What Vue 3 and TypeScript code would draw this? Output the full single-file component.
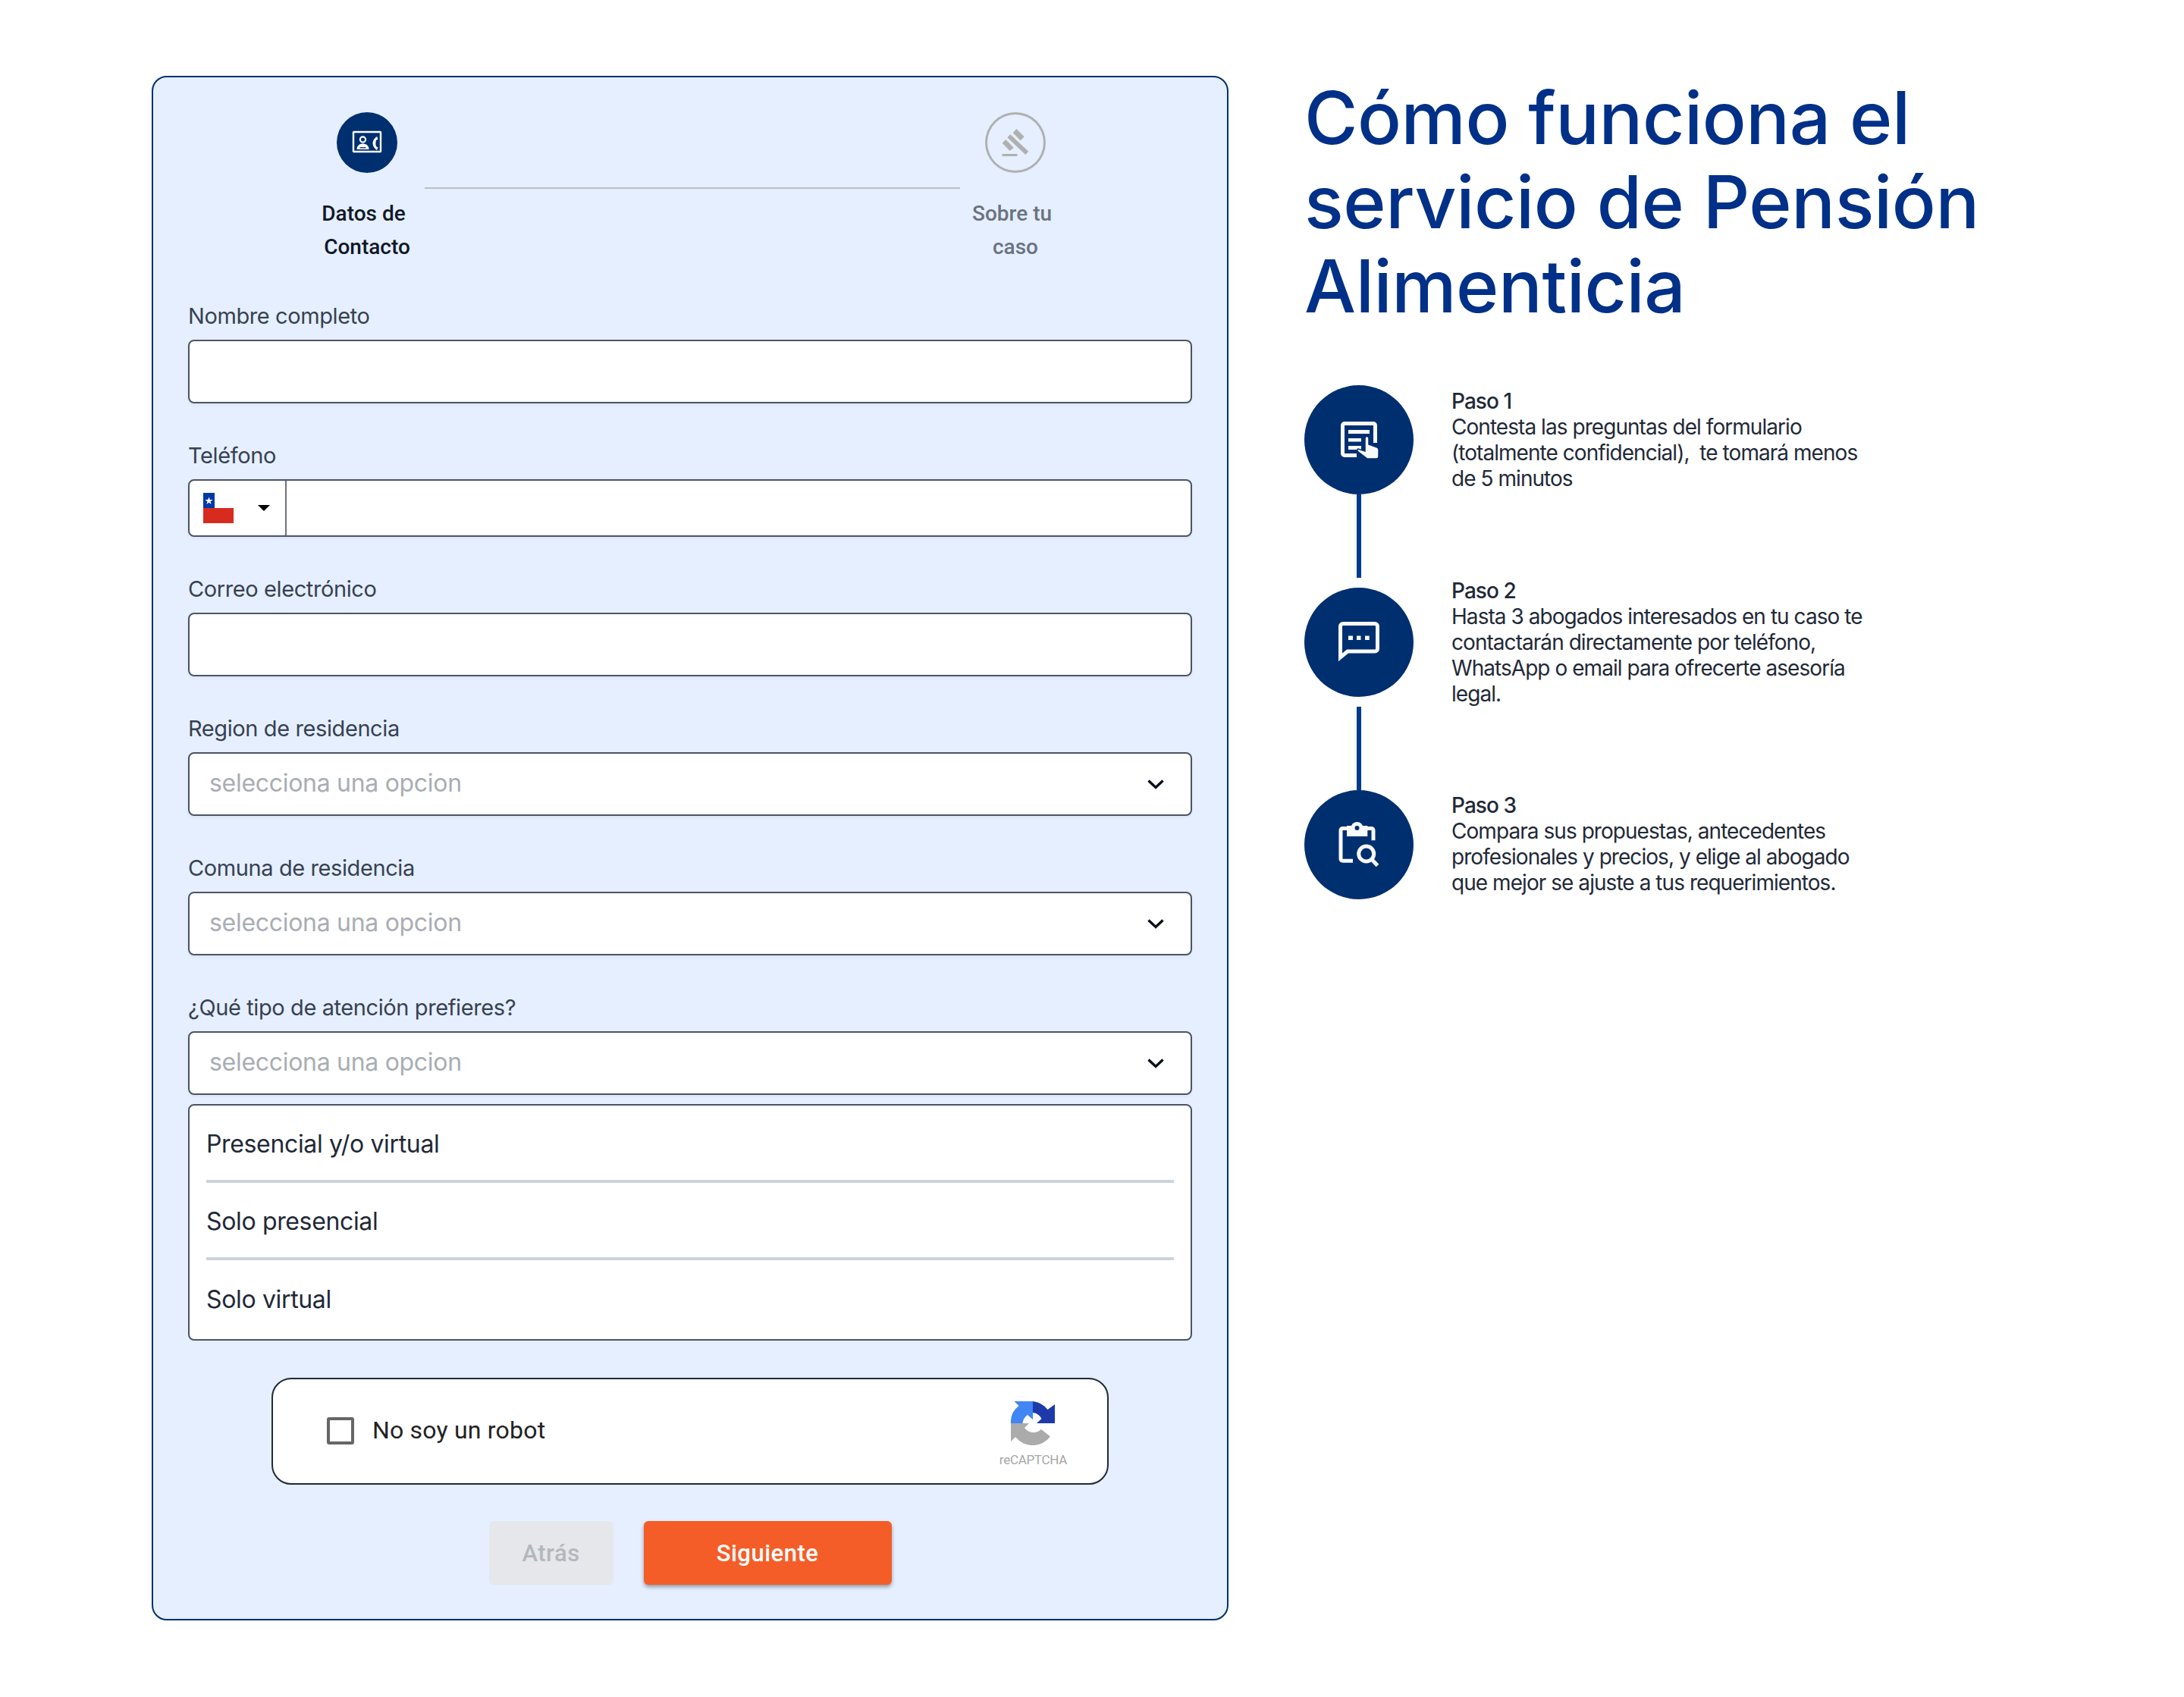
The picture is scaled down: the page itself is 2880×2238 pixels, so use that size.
<script setup lang="ts">
const selects = [
  { label: 'Region de residencia' },
  { label: 'Comuna de residencia' },
  { label: '¿Qué tipo de atención prefieres?' },
];
const options = ['Presencial y/o virtual', 'Solo presencial', 'Solo virtual'];
const steps = [
  {
    title: 'Paso 1',
    lines: ['Contesta las preguntas del formulario', '(totalmente confidencial),  te tomará menos', 'de 5 minutos'],
  },
  {
    title: 'Paso 2',
    lines: [
      'Hasta 3 abogados interesados en tu caso te',
      'contactarán directamente por teléfono,',
      'WhatsApp o email para ofrecerte asesoría',
      'legal.',
    ],
  },
  {
    title: 'Paso 3',
    lines: [
      'Compara sus propuestas, antecedentes',
      'profesionales y precios, y elige al abogado',
      'que mejor se ajuste a tus requerimientos.',
    ],
  },
];
</script>

<template>
  <div class="page">
    <form class="card" @submit.prevent>
      <div class="stepper">
        <div class="step active">
          <span class="step-circle">
            <svg width="80" height="80" viewBox="0 0 80 80">
              <rect x="22" y="26" width="36" height="26" rx="0.5" fill="none" stroke="#fff" stroke-width="2.4" />
              <circle cx="34.5" cy="36" r="3.6" fill="none" stroke="#fff" stroke-width="2.2" />
              <path d="M26.5 49c0-5 3.5-7.5 8-7.5s8 2.5 8 7.5z" fill="#fff" />
              <path d="M30.5 46.8h8" stroke="#002f6f" stroke-width="1.4" />
              <path d="M53 32c-3 2-5.5 5-5.5 9s2.5 7 5.5 9l1.5-3.5-2.5-1.5c-.8-2.5-.8-5.5 0-8l2.5-1.5z" fill="#fff" />
            </svg>
          </span>
          <span class="step-text"><span class="first-line">Datos de</span><br />Contacto</span>
        </div>
        <div class="step-line"></div>
        <div class="step">
          <span class="step-circle idle">
            <svg width="80" height="80" viewBox="0 0 80 80">
              <path d="M36.7 27.3L41.3 22l10.4 10.3-5 5z" fill="#b0b0ae" />
              <path d="M22.7 40.7l4.6-4.7 10.4 10.7-5 4.3z" fill="#b0b0ae" />
              <path d="M29.3 33.3l4-4 24 22.4-4 4.3z" fill="#b0b0ae" />
              <rect x="22.5" y="55" width="20" height="3" fill="#b0b0ae" />
            </svg>
          </span>
          <span class="step-text"><span class="first-line">Sobre tu</span><br />caso</span>
        </div>
      </div>

      <label class="field-label first">Nombre completo</label>
      <div class="input"></div>

      <label class="field-label">Teléfono</label>
      <div class="input phone">
        <div class="country">
          <svg class="flag" width="40" height="40" viewBox="0 0 40 40">
            <rect width="15" height="20" fill="#0039a6" />
            <rect x="15" width="25" height="20" fill="#fff" />
            <rect y="20" width="40" height="20" fill="#d72b1f" />
            <path d="M7.5 5.5l1.3 3.6h3.7l-3 2.3 1.1 3.6-3.1-2.2-3.1 2.2 1.1-3.6-3-2.3h3.7z" fill="#fff" />
          </svg>
          <span class="caret"></span>
        </div>
      </div>

      <label class="field-label">Correo electrónico</label>
      <div class="input"></div>

      <template v-for="item in selects" :key="item.label">
        <label class="field-label">{{ item.label }}</label>
        <div class="input select">
          <span class="placeholder">selecciona una opcion</span>
          <svg width="24" height="24" viewBox="0 0 24 24">
            <path d="M2.5 7.5L12 16.5l9.5-9" fill="none" stroke="#0b0f19" stroke-width="3.4" />
          </svg>
        </div>
      </template>

      <ul class="option-list">
        <li v-for="opt in options" :key="opt" class="option">{{ opt }}</li>
      </ul>

      <div class="captcha">
        <span class="check"></span>
        <span class="captcha-text">No soy un robot</span>
        <div class="captcha-brand">
          <svg width="58" height="58" viewBox="0 0 58 58">
            <path d="M29 0H4.5L10.5 6A27 27 0 0 0 0 29H15.5A15 15 0 0 1 22 18L29 24Z" fill="#4285f4" />
            <path d="M29 0A29 29 0 0 1 48.5 11L58 4V29H34L40.5 23A15 15 0 0 0 29 15Z" fill="#1c3aa9" />
            <path d="M0 29H24L18 35A14.5 14.5 0 0 0 40 37L52 46.5A29 29 0 0 1 6 47L0 53Z" fill="#ababab" />
          </svg>
          <span class="brand-name">reCAPTCHA</span>
        </div>
      </div>

      <div class="actions">
        <button type="button" class="btn back" disabled>Atrás</button>
        <button type="submit" class="btn next">Siguiente</button>
      </div>
    </form>

    <aside class="how">
      <h1 class="how-title">Cómo funciona el<br />servicio de Pensión<br />Alimenticia</h1>
      <div class="timeline">
        <div v-for="(step, i) in steps" :key="step.title" class="tl-row" :class="'row-' + (i + 1)">
          <div class="tl-marker">
            <span class="tl-circle">
              <svg v-if="i === 0" width="144" height="144" viewBox="0 0 144 144">
                <path d="M69 92.5H53a2.5 2.5 0 0 1-2.5-2.5V53a2.5 2.5 0 0 1 2.5-2.5h38a2.5 2.5 0 0 1 2.5 2.5v23" fill="none" stroke="#f8fafc" stroke-width="5" />
                <path d="M58 59h28v5H58zM58 70h17v4.5H58zM58 80h17v5H58z" fill="#f8fafc" />
                <path d="M80 70a2.5 2.5 0 0 1 5 0v8l11 4q2 1 2 3v9q0 3-3 3H83L70 87q-1-2 1-3l9 3z" fill="#f8fafc" stroke="#002f6f" stroke-width="1.5" />
              </svg>
              <svg v-else-if="i === 1" width="144" height="144" viewBox="0 0 144 144">
                <path d="M47.5 92V51a3.5 3.5 0 0 1 3.5-3.5h42a3.5 3.5 0 0 1 3.5 3.5v29.5a3.5 3.5 0 0 1-3.5 3.5H57z" fill="none" stroke="#f8fafc" stroke-width="5" />
                <path d="M58 63.5h6V69h-6zM69 63.5h5.5V69H69zM80 63.5h5.7V69H80z" fill="#f8fafc" />
              </svg>
              <svg v-else width="144" height="144" viewBox="0 0 144 144">
                <path d="M64 93.2H50.5a2.5 2.5 0 0 1-2.5-2.5V53a2.5 2.5 0 0 1 2.5-2.5H56M83 50.5h5.5A2.5 2.5 0 0 1 91 53v13.3" fill="none" stroke="#f8fafc" stroke-width="5" />
                <rect x="56" y="47" width="27.3" height="14" fill="#f8fafc" />
                <circle cx="69.5" cy="50" r="8" fill="#f8fafc" />
                <circle cx="69.5" cy="50" r="3" fill="#002f6f" />
                <circle cx="81.7" cy="84" r="10" fill="none" stroke="#f8fafc" stroke-width="5" />
                <path d="M89 91.5l7.5 8" stroke="#f8fafc" stroke-width="5" />
              </svg>
            </span>
            <span v-if="i < 2" class="tl-line"></span>
          </div>
          <div class="tl-text">
            <p class="tl-title">{{ step.title }}</p>
            <p v-for="line in step.lines" :key="line">{{ line }}</p>
          </div>
        </div>
      </div>
    </aside>
  </div>
</template>

<style scoped>
.page {
  display: flex;
  align-items: flex-start;
  gap: 100px;
  width: 2880px;
  height: 2238px;
  box-sizing: border-box;
  padding: 100px 0 0 200px;
  background: #fff;
  font-family: Inter, "Noto Sans", sans-serif;
}

.card {
  box-sizing: border-box;
  width: 1420px;
  height: 2037px;
  padding: 46px 46px 0;
  background: #e5efff;
  border: 2px solid #002f6f;
  border-radius: 20px;
  display: flex;
  flex-direction: column;
}

.stepper {
  display: flex;
  align-items: flex-start;
  height: 250px;
}

.step {
  width: 146px;
  flex: none;
  display: flex;
  flex-direction: column;
  align-items: center;
  color: #6b7280;
}

.step.active {
  margin-left: 163px;
  color: #111827;
}

.step-circle {
  width: 80px;
  height: 80px;
  border-radius: 50%;
  background: #002f6f;
  display: flex;
  align-items: center;
  justify-content: center;
}

.step-circle.idle {
  background: transparent;
  box-shadow: inset 0 0 0 3px #b0b0ae;
}

.step-text {
  margin-top: 32px;
  font-family: Roboto, sans-serif;
  font-size: 28px;
  font-weight: 500;
  line-height: 44px;
  text-align: center;
}

.first-line {
  padding-right: 9px;
}

.step-line {
  width: 706px;
  height: 2px;
  flex: none;
  margin-top: 99px;
  margin-left: 3px;
  background: #bdbdbd;
}

.field-label {
  display: block;
  height: 32px;
  margin: 53px 0 15px;
  font-size: 29px;
  line-height: 32px;
  color: #374151;
  letter-spacing: -0.4px;
}

.field-label.first {
  margin-top: 3px;
}

.input {
  box-sizing: border-box;
  height: 84px;
  flex: none;
  background: #fff;
  border: 2px solid #4b5563;
  border-radius: 8px;
  box-shadow: 0 2px 4px rgba(0, 0, 0, 0.05);
}

.input.phone {
  height: 76px;
  display: flex;
}

.input.select {
  display: flex;
  align-items: center;
  justify-content: space-between;
  padding: 0 34px 0 26px;
}

.country {
  box-sizing: border-box;
  width: 128px;
  height: 100%;
  display: flex;
  align-items: center;
  padding-left: 18px;
  border-right: 2px solid #6b7280;
}

.caret {
  margin-left: 32px;
  border-left: 8px solid transparent;
  border-right: 8px solid transparent;
  border-top: 8px solid #000;
}

.placeholder {
  font-size: 32px;
  line-height: 40px;
  margin-top: -2px;
  color: #a9adb4;
  letter-spacing: -0.3px;
}

.option-list {
  box-sizing: border-box;
  height: 312px;
  flex: none;
  margin: 12px 0 0;
  padding: 0 22px;
  list-style: none;
  background: #fff;
  border: 2px solid #4b5563;
  border-radius: 8px;
}

.option {
  height: 102px;
  padding-top: 2px;
  display: flex;
  align-items: center;
  font-size: 32px;
  color: #1f2937;
  letter-spacing: -0.35px;
  border-bottom: 4px solid #cdd3dc;
  box-sizing: border-box;
}

.option:last-child {
  padding-top: 0;
  border-bottom: none;
}

.captcha {
  box-sizing: border-box;
  flex: none;
  align-self: center;
  width: 1104px;
  height: 141px;
  margin-top: 49px;
  padding: 0 53px 0 71px;
  display: flex;
  align-items: center;
  background: #fff;
  border: 2px solid #1f2937;
  border-radius: 26px;
  font-family: Roboto, sans-serif;
}

.check {
  box-sizing: border-box;
  width: 36px;
  height: 36px;
  margin-top: -2px;
  border: 4px solid #666;
  border-radius: 3px;
}

.captcha-text {
  margin-top: -3px;
  margin-left: 24px;
  font-size: 32px;
  letter-spacing: 0.2px;
  color: #222;
}

.captcha-brand {
  margin-left: auto;
  display: flex;
  flex-direction: column;
  align-items: center;
  gap: 8px;
  padding-top: 8px;
}

.brand-name {
  font-size: 17px;
  line-height: 22px;
  letter-spacing: -0.3px;
  color: #a6a6a6;
}

.actions {
  flex: none;
  display: flex;
  justify-content: center;
  gap: 40px;
  margin-top: 48px;
}

.btn {
  height: 84px;
  border: none;
  border-radius: 6px;
  font-family: Roboto, sans-serif;
  font-size: 31px;
  font-weight: 500;
  letter-spacing: 0.5px;
}

.btn.back {
  width: 164px;
  background: #e5e7eb;
  color: #b4b7bb;
}

.btn.next {
  width: 327px;
  background: #f45d27;
  color: #fff;
  box-shadow: 0 3px 5px rgba(0, 0, 0, 0.35);
}

.how {
  width: 900px;
}

.how-title {
  margin: 0;
  font-size: 96px;
  font-weight: 550;
  line-height: 111px;
  color: #003087;
  letter-spacing: -0.4px;
}

.timeline {
  margin-top: 75px;
  display: flex;
  flex-direction: column;
}

.tl-row {
  display: flex;
  gap: 50px;
  height: 267px;
}

.tl-marker {
  width: 144px;
  flex: none;
  display: flex;
  flex-direction: column;
  align-items: center;
}

.tl-circle {
  width: 144px;
  height: 144px;
  flex: none;
  border-radius: 50%;
  background: #002f6f;
  display: flex;
  align-items: center;
  justify-content: center;
}

.tl-line {
  width: 6px;
  height: 110px;
  flex: none;
  background: #003a8c;
}

.row-2 .tl-line {
  margin-top: 13px;
}

.tl-text {
  padding-top: 4px;
  font-size: 28px;
  line-height: 34px;
  color: #1f2937;
  letter-spacing: -0.95px;
}

.row-2 .tl-text {
  padding-top: 0;
  margin-top: -13px;
}

.row-3 .tl-text {
  padding-top: 3px;
}

.tl-text p {
  margin: 0;
  white-space: pre;
}

.tl-title {
  font-weight: 500;
}
</style>

<style>
html,
body {
  margin: 0;
  background: #fff;
}
</style>
